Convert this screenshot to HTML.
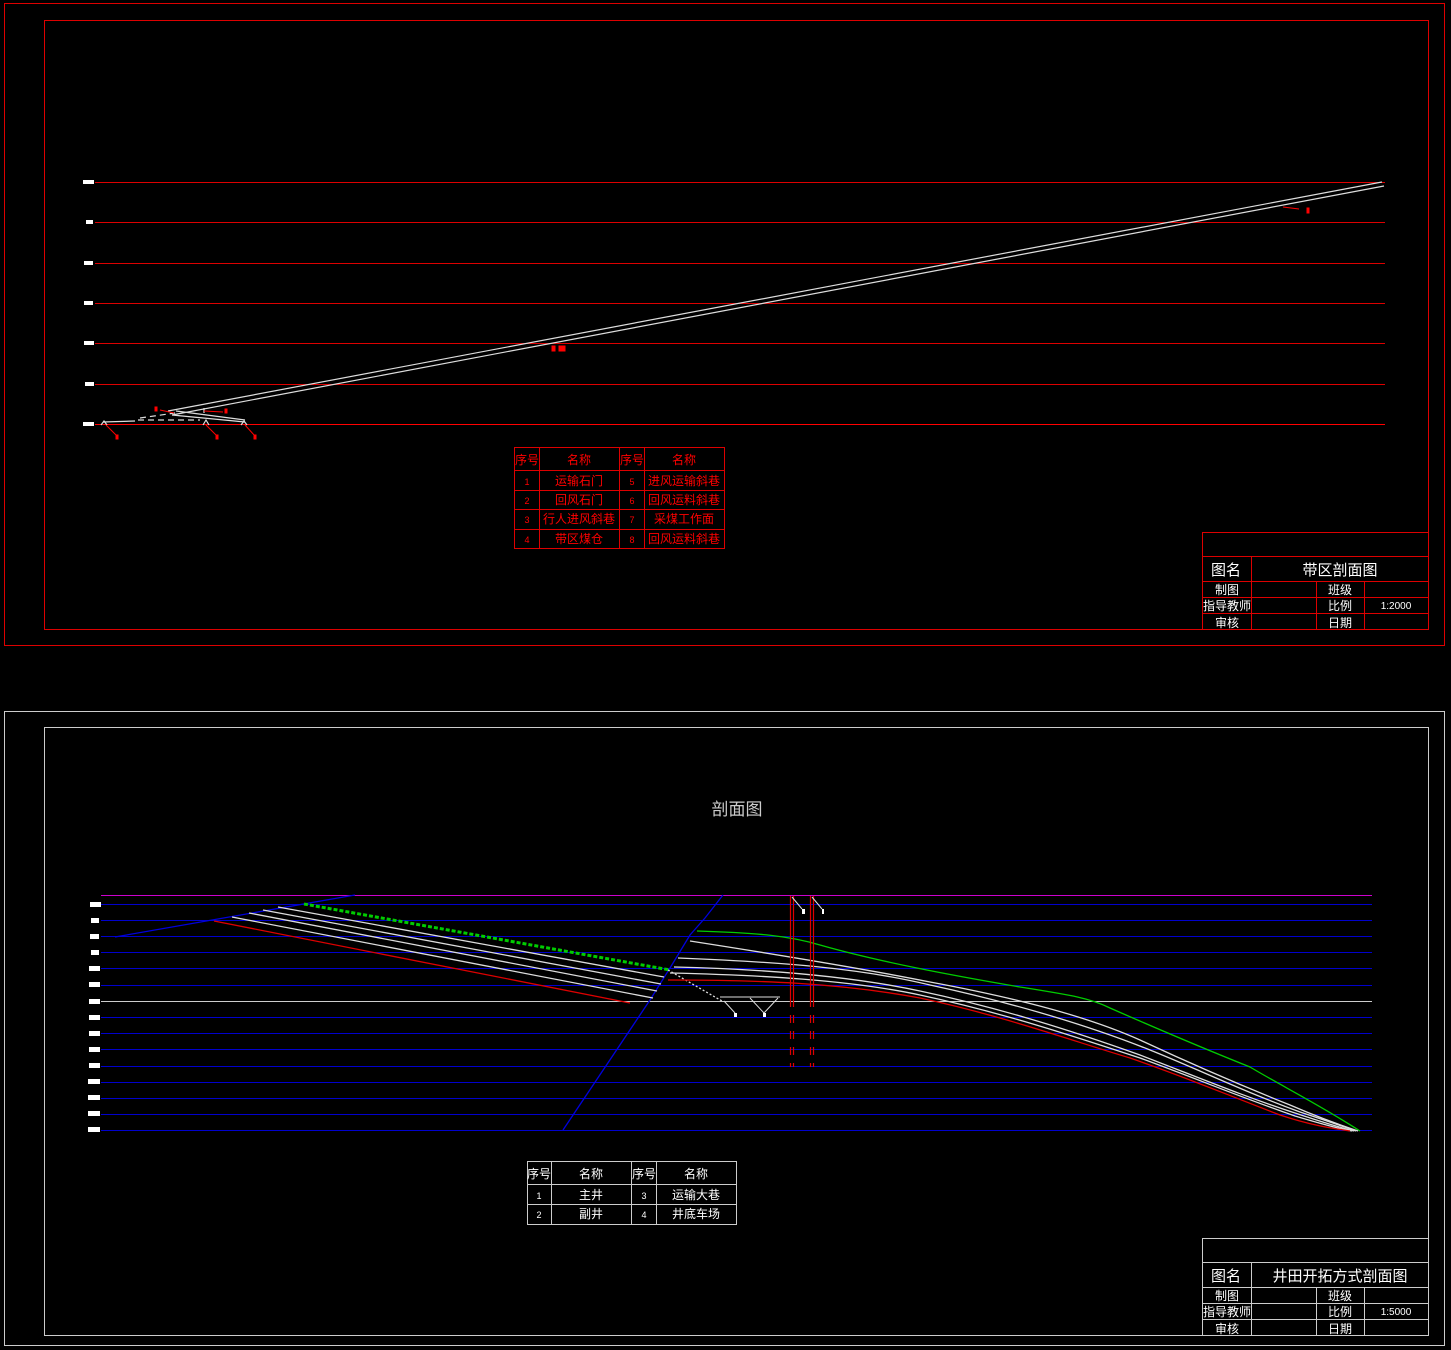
<!DOCTYPE html>
<html><head><meta charset="utf-8"><style>
html,body{margin:0;padding:0;background:#000;}
svg{display:block;}
text{font-family:"Liberation Sans","Noto Sans CJK SC",sans-serif;}
.c{shape-rendering:crispEdges;}
</style></head><body>
<svg width="1451" height="1350" viewBox="0 0 1451 1350" xmlns="http://www.w3.org/2000/svg">
<rect width="1451" height="1350" fill="#000"/>
<!-- TOP FRAME -->
<g class="c">
<rect x="4.5" y="3.5" width="1440" height="642" fill="none" stroke="#d00" stroke-width="1"/>
<rect x="44.5" y="20.5" width="1384" height="609" fill="none" stroke="#d00" stroke-width="1"/>
<g stroke="#d00" stroke-width="1">
<line x1="95" y1="182.5" x2="1385" y2="182.5"/>
<line x1="95" y1="222.5" x2="1385" y2="222.5"/>
<line x1="95" y1="263.5" x2="1385" y2="263.5"/>
<line x1="95" y1="303.5" x2="1385" y2="303.5"/>
<line x1="95" y1="343.5" x2="1385" y2="343.5"/>
<line x1="95" y1="384.5" x2="1385" y2="384.5"/>
<line x1="95" y1="424.5" x2="1385" y2="424.5" stroke="#f00"/>
</g>
</g>
<g fill="#fff">
<rect x="83" y="180" width="11" height="4"/>
<rect x="86" y="220" width="7" height="4"/>
<rect x="84" y="261" width="9" height="4"/>
<rect x="84" y="301" width="9" height="4"/>
<rect x="84" y="341" width="10" height="4"/>
<rect x="85" y="382" width="9" height="4"/>
<rect x="83" y="422" width="11" height="4"/>
</g>
<g stroke="#ddd" stroke-width="1.2" fill="none">
<line x1="168" y1="411" x2="1382" y2="182"/>
<line x1="172" y1="415" x2="1384" y2="186"/>
<line x1="172" y1="415" x2="245" y2="422"/>
<line x1="176" y1="411" x2="245" y2="420"/>
<line x1="103" y1="422" x2="135" y2="421"/>
<line x1="138" y1="420" x2="200" y2="420" stroke-dasharray="6,4"/>
<line x1="140" y1="418" x2="175" y2="413" stroke-dasharray="6,4"/>
<path d="M101 425 L104 421 L107 425 M203 425 L206 420 L209 425 M241 425 L244 421 L247 425"/>
<line x1="204" y1="408" x2="204" y2="413"/>
</g>
<g stroke="#f00" stroke-width="1" fill="#f00">
<line x1="106" y1="425" x2="117" y2="436"/><rect x="116" y="435" width="2" height="4"/>
<line x1="206" y1="425" x2="217" y2="436"/><rect x="216" y="435" width="2" height="4"/>
<line x1="245" y1="425" x2="255" y2="436"/><rect x="254" y="435" width="2" height="4"/>
<line x1="160" y1="410" x2="174" y2="413"/><rect x="155" y="407" width="2" height="4"/>
<line x1="204" y1="411" x2="223" y2="412"/><rect x="225" y="409" width="2" height="4"/>
<rect x="552" y="346" width="3" height="5"/><rect x="559" y="346" width="6" height="5"/>
<line x1="1283" y1="207" x2="1299" y2="209"/><rect x="1307" y="208" width="2" height="5"/>
</g>
<g stroke="#d00" stroke-width="1.3" fill="none" class="c">
<rect x="514.5" y="447.5" width="210" height="101"/>
<line x1="514" y1="470.5" x2="724" y2="470.5"/>
<line x1="514" y1="490.5" x2="724" y2="490.5"/>
<line x1="514" y1="509.5" x2="724" y2="509.5"/>
<line x1="514" y1="529.5" x2="724" y2="529.5"/>
<line x1="539.5" y1="447" x2="539.5" y2="548"/>
<line x1="619.5" y1="447" x2="619.5" y2="548"/>
<line x1="644.5" y1="447" x2="644.5" y2="548"/>
</g>
<g fill="#f00" font-size="12" text-anchor="middle">
<text x="527" y="464">序号</text><text x="579" y="464">名称</text><text x="632" y="464">序号</text><text x="684" y="464">名称</text>
<text x="527" y="485" font-size="9">1</text><text x="579" y="485">运输石门</text><text x="632" y="485" font-size="9">5</text><text x="684" y="485">进风运输斜巷</text>
<text x="527" y="504" font-size="9">2</text><text x="579" y="504">回风石门</text><text x="632" y="504" font-size="9">6</text><text x="684" y="504">回风运料斜巷</text>
<text x="527" y="523" font-size="9">3</text><text x="579" y="523">行人进风斜巷</text><text x="632" y="523" font-size="9">7</text><text x="684" y="523">采煤工作面</text>
<text x="527" y="543" font-size="9">4</text><text x="579" y="543">带区煤仓</text><text x="632" y="543" font-size="9">8</text><text x="684" y="543">回风运料斜巷</text>
</g>
<g stroke="#d00" stroke-width="1.3" fill="none" class="c">
<rect x="1202.5" y="532.5" width="226" height="97"/>
<line x1="1202" y1="556.5" x2="1428" y2="556.5"/>
<line x1="1202" y1="581.5" x2="1428" y2="581.5"/>
<line x1="1202" y1="597.5" x2="1428" y2="597.5"/>
<line x1="1202" y1="613.5" x2="1428" y2="613.5"/>
<line x1="1251.5" y1="556" x2="1251.5" y2="629"/>
<line x1="1316.5" y1="581" x2="1316.5" y2="629"/>
<line x1="1364.5" y1="581" x2="1364.5" y2="629"/>
</g>
<g fill="#fff" text-anchor="middle" font-size="12">
<text x="1226" y="575" font-size="15">图名</text><text x="1340" y="575" font-size="15">带区剖面图</text>
<text x="1227" y="594">制图</text><text x="1340" y="594">班级</text>
<text x="1227" y="610">指导教师</text><text x="1340" y="610">比例</text><text x="1396" y="609" font-size="10">1:2000</text>
<text x="1227" y="627">审核</text><text x="1340" y="627">日期</text>
</g>

<!-- BOTTOM FRAME -->
<g class="c">
<rect x="4.5" y="711.5" width="1440" height="634" fill="none" stroke="#ccc" stroke-width="1"/>
<rect x="44.5" y="727.5" width="1384" height="608" fill="none" stroke="#ccc" stroke-width="1"/>
</g>
<text x="737" y="815" fill="#ccc" font-size="17" text-anchor="middle">剖面图</text>
<g class="c">
<line x1="101" y1="895.5" x2="1372" y2="895.5" stroke="#c0c" stroke-width="1"/>
<g stroke="#00c" stroke-width="1">
<line x1="101" y1="904.5" x2="1372" y2="904.5"/>
<line x1="101" y1="920.5" x2="1372" y2="920.5"/>
<line x1="101" y1="936.5" x2="1372" y2="936.5"/>
<line x1="101" y1="952.5" x2="1372" y2="952.5"/>
<line x1="101" y1="968.5" x2="1372" y2="968.5"/>
<line x1="101" y1="985.5" x2="1372" y2="985.5"/>
<line x1="101" y1="1017.5" x2="1372" y2="1017.5"/>
<line x1="101" y1="1033.5" x2="1372" y2="1033.5"/>
<line x1="101" y1="1049.5" x2="1372" y2="1049.5"/>
<line x1="101" y1="1066.5" x2="1372" y2="1066.5"/>
<line x1="101" y1="1082.5" x2="1372" y2="1082.5"/>
<line x1="101" y1="1098.5" x2="1372" y2="1098.5"/>
<line x1="101" y1="1114.5" x2="1372" y2="1114.5"/>
<line x1="101" y1="1130.5" x2="1372" y2="1130.5"/>
</g>
<line x1="101" y1="1001.5" x2="1372" y2="1001.5" stroke="#ccc" stroke-width="1"/>
</g>
<g fill="#fff">
<rect x="90" y="902" width="11" height="5"/><rect x="91" y="918" width="8" height="5"/>
<rect x="90" y="934" width="9" height="5"/><rect x="91" y="950" width="8" height="5"/>
<rect x="89" y="966" width="11" height="5"/><rect x="89" y="982" width="11" height="5"/>
<rect x="89" y="999" width="11" height="5"/><rect x="89" y="1015" width="11" height="5"/>
<rect x="89" y="1031" width="11" height="5"/><rect x="89" y="1047" width="11" height="5"/>
<rect x="89" y="1063" width="11" height="5"/><rect x="88" y="1079" width="12" height="5"/>
<rect x="88" y="1095" width="12" height="5"/><rect x="88" y="1111" width="12" height="5"/>
<rect x="88" y="1127" width="12" height="5"/>
</g>
<g fill="none" stroke-width="1.3">
<line x1="115" y1="937" x2="355" y2="895" stroke="#00d"/>
<path d="M563 1130 L650 1000 L670 968 L690 935 L705 918 L723 895" stroke="#00d"/>
<line x1="214" y1="921" x2="630" y2="1003" stroke="#d00"/>
<g stroke="#ddd">
<line x1="232" y1="917" x2="653" y2="998"/>
<line x1="249" y1="913" x2="657" y2="991"/>
<line x1="263" y1="910" x2="661" y2="984"/>
<line x1="278" y1="907" x2="664" y2="977"/>
</g>
<line x1="304" y1="904" x2="670" y2="970" stroke="#0c0" stroke-width="3" stroke-dasharray="4,2"/>
<line x1="668" y1="970" x2="722" y2="1001" stroke="#ddd" stroke-dasharray="2,2"/>
</g>
<g fill="none" stroke-width="1.3">
<path d="M697 931 C760 933 790 936 820 945 C880 962 950 975 1020 987 C1070 995 1090 998 1110 1008 C1160 1030 1220 1055 1250 1067 C1280 1085 1320 1105 1360 1131" stroke="#0c0"/>
<path d="M690 941 C780 955 860 968 930 982 C1000 995 1080 1013 1140 1040 C1200 1068 1240 1085 1290 1105 C1320 1118 1340 1125 1358 1131" stroke="#ddd"/>
<path d="M678 958 C780 962 860 968 930 985 C1000 1000 1080 1022 1150 1050 C1200 1070 1240 1090 1300 1112 C1330 1122 1345 1127 1356 1131" stroke="#ddd"/>
<path d="M674 967 C760 969 850 976 920 991 C1000 1008 1070 1030 1140 1055 C1200 1078 1240 1095 1295 1113 C1325 1123 1342 1128 1354 1131" stroke="#ddd"/>
<path d="M670 973 C760 975 850 980 920 995 C1000 1012 1070 1035 1140 1058 C1200 1080 1240 1097 1295 1116 C1325 1125 1340 1129 1352 1131" stroke="#ddd"/>
<path d="M668 980 C760 980 840 983 920 998 C1000 1015 1070 1040 1130 1058 C1180 1075 1220 1092 1280 1115 C1310 1125 1330 1128 1350 1131" stroke="#d00"/>
</g>
<g stroke="#d00" stroke-width="1.2">
<line x1="790.5" y1="896" x2="790.5" y2="1007"/><line x1="793.5" y1="896" x2="793.5" y2="1007"/>
<line x1="810.5" y1="896" x2="810.5" y2="1007"/><line x1="813.5" y1="896" x2="813.5" y2="1007"/>
<g stroke-dasharray="8,8"><line x1="790.5" y1="1015" x2="790.5" y2="1067"/><line x1="793.5" y1="1015" x2="793.5" y2="1067"/>
<line x1="810.5" y1="1015" x2="810.5" y2="1067"/><line x1="813.5" y1="1015" x2="813.5" y2="1067"/></g>
</g>
<g stroke="#ddd" stroke-width="1" fill="none">
<path d="M792 897 L802 909 M812 897 L822 909"/>
<path d="M720 997 L780 997 M724 1001 L735 1013 M750 998 L764 1013 L778 998"/>
</g>
<g fill="#fff"><rect x="802" y="909" width="3" height="5"/><rect x="822" y="909" width="2" height="5"/>
<rect x="734" y="1013" width="3" height="4"/><rect x="763" y="1013" width="3" height="4"/></g>
<g stroke="#ccc" stroke-width="1.3" fill="none" class="c">
<rect x="527.5" y="1161.5" width="209" height="63"/>
<line x1="527" y1="1184.5" x2="736" y2="1184.5"/>
<line x1="527" y1="1204.5" x2="736" y2="1204.5"/>
<line x1="551.5" y1="1161" x2="551.5" y2="1224"/>
<line x1="631.5" y1="1161" x2="631.5" y2="1224"/>
<line x1="656.5" y1="1161" x2="656.5" y2="1224"/>
</g>
<g fill="#fff" font-size="12" text-anchor="middle">
<text x="539" y="1178">序号</text><text x="591" y="1178">名称</text><text x="644" y="1178">序号</text><text x="696" y="1178">名称</text>
<text x="539" y="1199" font-size="9">1</text><text x="591" y="1199">主井</text><text x="644" y="1199" font-size="9">3</text><text x="696" y="1199">运输大巷</text>
<text x="539" y="1218" font-size="9">2</text><text x="591" y="1218">副井</text><text x="644" y="1218" font-size="9">4</text><text x="696" y="1218">井底车场</text>
</g>
<g stroke="#ccc" stroke-width="1.3" fill="none" class="c">
<rect x="1202.5" y="1238.5" width="226" height="97"/>
<line x1="1202" y1="1262.5" x2="1428" y2="1262.5"/>
<line x1="1202" y1="1287.5" x2="1428" y2="1287.5"/>
<line x1="1202" y1="1303.5" x2="1428" y2="1303.5"/>
<line x1="1202" y1="1319.5" x2="1428" y2="1319.5"/>
<line x1="1251.5" y1="1262" x2="1251.5" y2="1335"/>
<line x1="1316.5" y1="1287" x2="1316.5" y2="1335"/>
<line x1="1364.5" y1="1287" x2="1364.5" y2="1335"/>
</g>
<g fill="#fff" text-anchor="middle" font-size="12">
<text x="1226" y="1281" font-size="15">图名</text><text x="1340" y="1281" font-size="15">井田开拓方式剖面图</text>
<text x="1227" y="1300">制图</text><text x="1340" y="1300">班级</text>
<text x="1227" y="1316">指导教师</text><text x="1340" y="1316">比例</text><text x="1396" y="1315" font-size="10">1:5000</text>
<text x="1227" y="1333">审核</text><text x="1340" y="1333">日期</text>
</g>
</svg>
</body></html>
